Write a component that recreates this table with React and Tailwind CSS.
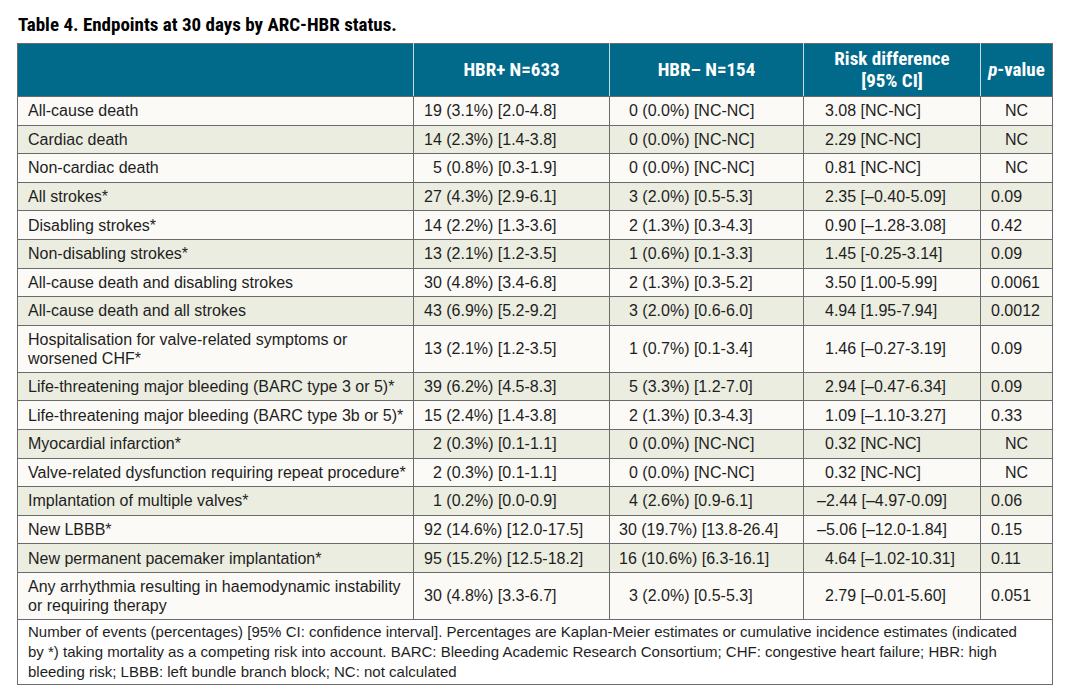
import React from "react";

const rows = [
  ["All-cause death", "19 (3.1%) [2.0-4.8]", "0 (0.0%) [NC-NC]", "3.08 [NC-NC]", "NC"],
  ["Cardiac death", "14 (2.3%) [1.4-3.8]", "0 (0.0%) [NC-NC]", "2.29 [NC-NC]", "NC"],
  ["Non-cardiac death", "5 (0.8%) [0.3-1.9]", "0 (0.0%) [NC-NC]", "0.81 [NC-NC]", "NC"],
  ["All strokes*", "27 (4.3%) [2.9-6.1]", "3 (2.0%) [0.5-5.3]", "2.35 [–0.40-5.09]", "0.09"],
  ["Disabling strokes*", "14 (2.2%) [1.3-3.6]", "2 (1.3%) [0.3-4.3]", "0.90 [–1.28-3.08]", "0.42"],
  ["Non-disabling strokes*", "13 (2.1%) [1.2-3.5]", "1 (0.6%) [0.1-3.3]", "1.45 [-0.25-3.14]", "0.09"],
  ["All-cause death and disabling strokes", "30 (4.8%) [3.4-6.8]", "2 (1.3%) [0.3-5.2]", "3.50 [1.00-5.99]", "0.0061"],
  ["All-cause death and all strokes", "43 (6.9%) [5.2-9.2]", "3 (2.0%) [0.6-6.0]", "4.94 [1.95-7.94]", "0.0012"],
  [["Hospitalisation for valve-related symptoms or", "worsened CHF*"], "13 (2.1%) [1.2-3.5]", "1 (0.7%) [0.1-3.4]", "1.46 [–0.27-3.19]", "0.09"],
  ["Life-threatening major bleeding (BARC type 3 or 5)*", "39 (6.2%) [4.5-8.3]", "5 (3.3%) [1.2-7.0]", "2.94 [–0.47-6.34]", "0.09"],
  ["Life-threatening major bleeding (BARC type 3b or 5)*", "15 (2.4%) [1.4-3.8]", "2 (1.3%) [0.3-4.3]", "1.09 [–1.10-3.27]", "0.33"],
  ["Myocardial infarction*", "2 (0.3%) [0.1-1.1]", "0 (0.0%) [NC-NC]", "0.32 [NC-NC]", "NC"],
  ["Valve-related dysfunction requiring repeat procedure*", "2 (0.3%) [0.1-1.1]", "0 (0.0%) [NC-NC]", "0.32 [NC-NC]", "NC"],
  ["Implantation of multiple valves*", "1 (0.2%) [0.0-0.9]", "4 (2.6%) [0.9-6.1]", "–2.44 [–4.97-0.09]", "0.06"],
  ["New LBBB*", "92 (14.6%) [12.0-17.5]", "30 (19.7%) [13.8-26.4]", "–5.06 [–12.0-1.84]", "0.15"],
  ["New permanent pacemaker implantation*", "95 (15.2%) [12.5-18.2]", "16 (10.6%) [6.3-16.1]", "4.64 [–1.02-10.31]", "0.11"],
  [["Any arrhythmia resulting in haemodynamic instability", "or requiring therapy"], "30 (4.8%) [3.3-6.7]", "3 (2.0%) [0.5-5.3]", "2.79 [–0.01-5.60]", "0.051"],
];

const oneDigit = (s) => s.split(" ")[0].length === 1;

export default function App() {
  return (
    <div className="w-[1069px] h-[700px] bg-white pl-[17px] pt-[13px] font-['Liberation_Sans',Arial,sans-serif] text-[#1e1e1e]">
      <h1 className="font-['Liberation_Sans_Narrow','Roboto_Condensed','DejaVu_Sans_Condensed',sans-serif] font-bold text-[19px] leading-[24px] text-black pl-[1px]">
        Table 4. Endpoints at 30 days by ARC-HBR status.
      </h1>

      <table className="mt-[6px] w-[1035px] table-fixed border-collapse text-[16px] leading-[19px]">
        <colgroup>
          <col className="w-[396px]" />
          <col className="w-[196px]" />
          <col className="w-[194px]" />
          <col className="w-[177px]" />
          <col className="w-[72px]" />
        </colgroup>
        <thead>
          <tr className="h-[53px] bg-[#016a8a] text-white font-['Liberation_Sans_Narrow','Roboto_Condensed','DejaVu_Sans_Condensed',sans-serif] font-bold text-[19px] leading-[22px]">
            <th className="border border-[#6b6b6b] border-r-[#c9dbe2]"></th>
            <th className="border border-[#6b6b6b] border-x-[#c9dbe2] text-center">HBR+ N=633</th>
            <th className="border border-[#6b6b6b] border-x-[#c9dbe2] text-center">HBR– N=154</th>
            <th className="border border-[#6b6b6b] border-x-[#c9dbe2] text-center">
              Risk difference
              <br />
              [95% CI]
            </th>
            <th className="border border-[#6b6b6b] border-l-[#c9dbe2] text-center">
              <i>p</i>-value
            </th>
          </tr>
        </thead>
        <tbody>
          {rows.map((r, i) => (
            <tr key={i} className={i % 2 === 0 ? "h-[28.6px] bg-[#fbfaf6]" : "h-[28.6px] bg-[#ecede1]"}>
              <td className="border border-[#6b6b6b] pl-[10px] py-[4px] whitespace-nowrap">
                {Array.isArray(r[0]) ? (
                  <>
                    {r[0][0]}
                    <br />
                    {r[0][1]}
                  </>
                ) : (
                  r[0]
                )}
              </td>
              <td className={"border border-[#6b6b6b] whitespace-nowrap " + (oneDigit(r[1]) ? "pl-[19px]" : "pl-[10px]")}>{r[1]}</td>
              <td className={"border border-[#6b6b6b] whitespace-nowrap " + (oneDigit(r[2]) ? "pl-[19px]" : "pl-[9px]")}>{r[2]}</td>
              <td className={"border border-[#6b6b6b] whitespace-nowrap " + (r[3].startsWith("–") ? "pl-[13px]" : "pl-[21px]")}>{r[3]}</td>
              <td className={"border border-[#6b6b6b] whitespace-nowrap " + (r[4] === "NC" ? "text-center" : "pl-[10px]")}>{r[4]}</td>
            </tr>
          ))}
          <tr className="bg-white">
            <td colSpan={5} className="border border-[#6b6b6b] px-[10px] pt-[2px] pb-[2px] leading-[20px] text-[15px] whitespace-nowrap">
              Number of events (percentages) [95% CI: confidence interval]. Percentages are Kaplan-Meier estimates or cumulative incidence estimates (indicated
              <br />
              by *) taking mortality as a competing risk into account. BARC: Bleeding Academic Research Consortium; CHF: congestive heart failure; HBR: high
              <br />
              bleeding risk; LBBB: left bundle branch block; NC: not calculated
            </td>
          </tr>
        </tbody>
      </table>
    </div>
  );
}
